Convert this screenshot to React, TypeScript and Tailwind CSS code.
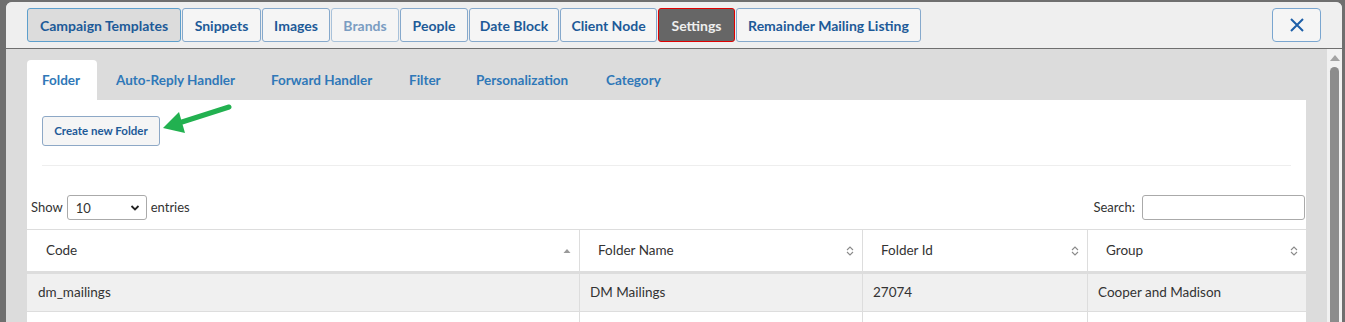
import React from 'react';

const topTabs = [
  { label: 'Campaign Templates', state: 'active', w: 'w-[154px]' },
  { label: 'Snippets', state: '', w: 'w-[79px]' },
  { label: 'Images', state: '', w: 'w-[68px]' },
  { label: 'Brands', state: 'disabled', w: 'w-[68px]' },
  { label: 'People', state: '', w: 'w-[68px]' },
  { label: 'Date Block', state: '', w: 'w-[90px]' },
  { label: 'Client Node', state: '', w: 'w-[97px]' },
  { label: 'Settings', state: 'selected', w: 'w-[77px]' },
  { label: 'Remainder Mailing Listing', state: '', w: 'w-[185px]' },
];

const subTabs = [
  { label: 'Folder', w: 'w-[70px]' },
  { label: 'Auto-Reply Handler', w: 'w-[151px]' },
  { label: 'Forward Handler', w: 'w-[134px]' },
  { label: 'Filter', w: 'w-[63px]' },
  { label: 'Personalization', w: 'w-[126px]' },
  { label: 'Category', w: 'w-[86px]' },
];

const columns = [
  { label: 'Code', width: 'w-[552px]', sort: 'asc' },
  { label: 'Folder Name', width: 'w-[283px]', sort: 'both' },
  { label: 'Folder Id', width: 'w-[225px]', sort: 'both' },
  { label: 'Group', width: 'w-[219px]', sort: 'both' },
];

const rows = [['dm_mailings', 'DM Mailings', '27074', 'Cooper and Madison']];

const SortIcon = ({ sort }: { sort: string }) =>
  sort === 'asc' ? (
    <svg width="8" height="6" viewBox="0 0 8 6">
      <path d="M0.5 5 L4 1 L7.5 5 Z" fill="#9a9a9a" />
    </svg>
  ) : (
    <svg width="8" height="12" viewBox="0 0 8 12">
      <path d="M1 5 L4 2 L7 5" stroke="#8a8a8a" strokeWidth="1.1" fill="none" />
      <path d="M1 7 L4 10 L7 7" stroke="#8a8a8a" strokeWidth="1.1" fill="none" />
    </svg>
  );

export default function App() {
  return (
    <div className="h-[322px] w-full overflow-hidden bg-[#6f6f6f] pt-[2px] pl-[6px] pr-[3px] font-['Lato',sans-serif] text-[#333]">
      <div className="flex h-full flex-col rounded-t-[6px] bg-[#dcdcdc]">
        {/* header */}
        <div className="flex h-[47px] shrink-0 items-center justify-between rounded-t-[6px] border-b border-[#6f6f6f] bg-[#efefef] px-[21px]">
          <div className="flex gap-[1px]">
            {topTabs.map(t => (
              <div
                key={t.label}
                className={
                  t.state === 'active'
                    ? `${t.w} flex h-[34px] items-center justify-center whitespace-nowrap rounded-[3px] border border-[#5d9fcc] bg-[#dcdcdc] text-[14px] font-bold text-[#1d5a98]`
                    : t.state === 'selected'
                    ? `${t.w} flex h-[34px] items-center justify-center whitespace-nowrap rounded-[3px] border border-[#e00000] bg-[#666666] text-[14px] font-bold text-[#eeeeee]`
                    : t.state === 'disabled'
                    ? `${t.w} flex h-[34px] items-center justify-center whitespace-nowrap rounded-[3px] border border-[#a9c2da] bg-[#f5f5f5] text-[14px] font-bold text-[#7b9dc2]`
                    : `${t.w} flex h-[34px] items-center justify-center whitespace-nowrap rounded-[3px] border border-[#86a9cc] bg-[#f5f5f5] text-[14px] font-bold text-[#1d5a98]`
                }
              >
                {t.label}
              </div>
            ))}
          </div>
          <div className="flex h-[34px] w-[49px] items-center justify-center rounded-[4px] border border-[#7aa6d0] bg-[#f5f5f5]">
            <svg width="16" height="16" viewBox="0 0 16 16">
              <path d="M2 2 L14 14 M14 2 L2 14" stroke="#1d5fa8" strokeWidth="2" />
            </svg>
          </div>
        </div>

        {/* body */}
        <div className="flex min-h-0 flex-1">
          <div className="ml-[21px] mt-[11px] flex w-[1279px] flex-col">
            <div className="flex h-[40px] shrink-0 items-stretch">
              {subTabs.map((s, i) => (
                <div
                  key={s.label}
                  className={
                    i === 0
                      ? `${s.w} mr-[4px] flex items-center whitespace-nowrap rounded-t-[4px] bg-white pl-[15px] text-[13.5px] font-bold text-[#2f78b8]`
                      : `${s.w} mr-[4px] flex items-center whitespace-nowrap pl-[15px] text-[13.5px] font-bold text-[#2f78b8]`
                  }
                >
                  {s.label}
                </div>
              ))}
            </div>

            <div className="flex-1 bg-white">
              <div className="relative px-[15px] pt-[16px]">
                <button className="h-[30px] w-[118px] rounded-[3px] border border-[#8da8c6] bg-[#f5f5f5] text-[11.5px] font-bold text-[#1d5a98]">
                  Create new Folder
                </button>
                <svg className="absolute left-[125px] top-[4px]" width="80" height="32" viewBox="0 0 80 32">
                  <path d="M77 3 L30 18" stroke="#22b150" strokeWidth="5" strokeLinecap="round" />
                  <path d="M11 24 L27 8 L33 29 Z" fill="#22b150" />
                </svg>
                <div className="mt-[19px] h-px bg-[#eeeeee]" />
              </div>

              <div className="mt-[29px] flex items-center justify-between pl-[4px] pr-[1px] text-[13px]">
                <div className="flex items-center gap-[4px]">
                  <span>Show</span>
                  <div className="flex h-[25px] w-[80px] items-center justify-between rounded-[3px] border border-[#aaaaaa] pl-[8px] pr-[6px]">
                    <span className="pt-[2px]">10</span>
                    <svg width="10" height="8" viewBox="0 0 10 8">
                      <path d="M1.5 2 L5 5.5 L8.5 2" stroke="#222" strokeWidth="1.8" fill="none" />
                    </svg>
                  </div>
                  <span>entries</span>
                </div>
                <div className="flex items-center gap-[7px]">
                  <span>Search:</span>
                  <div className="h-[25px] w-[163px] rounded-[3px] border border-[#aaaaaa]" />
                </div>
              </div>

              <div className="mt-[9px] border-t border-[#dddddd] text-[13.5px]">
                <div className="flex h-[44px] border-b-[3px] border-[#dddddd]">
                  {columns.map((c, i) => (
                    <div
                      key={c.label}
                      className={
                        i === 0
                          ? `${c.width} flex items-center justify-between pl-[19px] pr-[8px]`
                          : `${c.width} flex items-center justify-between border-l border-[#dddddd] pl-[18px] pr-[8px]`
                      }
                    >
                      <span>{c.label}</span>
                      <SortIcon sort={c.sort} />
                    </div>
                  ))}
                </div>
                {rows.map(r => (
                  <div key={r[0]} className="flex h-[38px] border-b border-[#dddddd] bg-[#f0f0f0]">
                    {r.map((v, i) => (
                      <div
                        key={i}
                        className={
                          i === 0
                            ? `${columns[i].width} flex items-center pl-[11px]`
                            : `${columns[i].width} flex items-center border-l border-[#dddddd] pl-[10px]`
                        }
                      >
                        {v}
                      </div>
                    ))}
                  </div>
                ))}
                <div className="flex h-[20px]">
                  {columns.map((c, i) => (
                    <div key={c.label} className={i === 0 ? c.width : `${c.width} border-l border-[#dddddd]`} />
                  ))}
                </div>
              </div>
            </div>
          </div>

          {/* scrollbar */}
          <div className="ml-[21px] flex w-[15px] flex-col items-center bg-[#f1f1f1] pt-[6px]">
            <svg width="10" height="6" viewBox="0 0 10 6">
              <path d="M0 6 L5 0 L10 6 Z" fill="#a3a3a3" />
            </svg>
            <div className="mt-[6px] w-[9px] flex-1 rounded-t-full bg-[#8c8c8c]" />
          </div>
        </div>
      </div>
    </div>
  );
}
